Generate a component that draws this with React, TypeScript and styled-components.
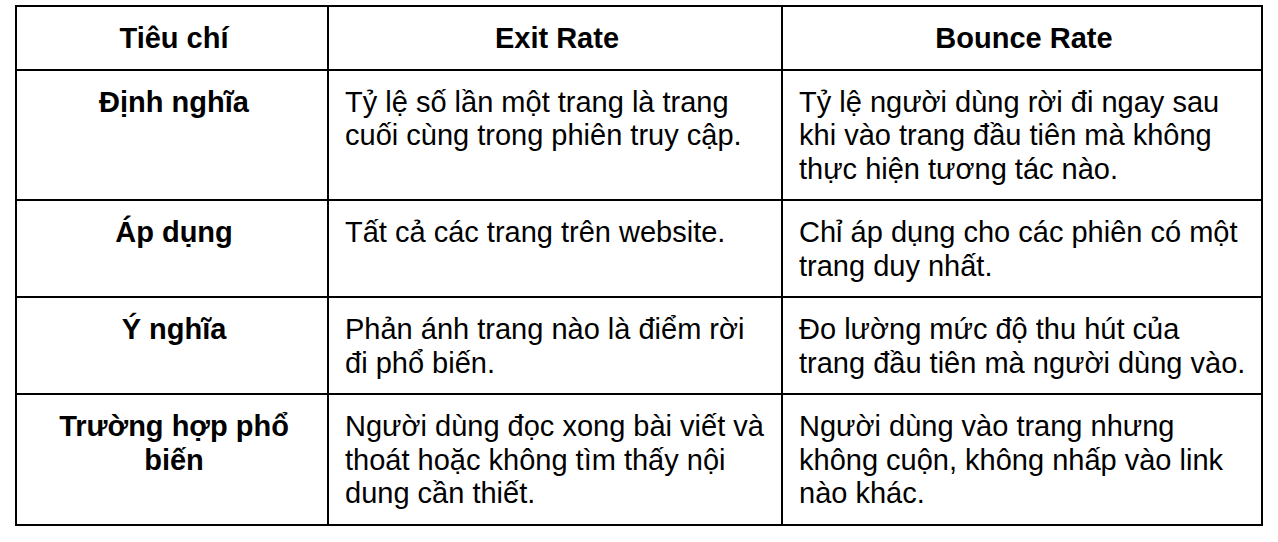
import React from "react";
import styled, { createGlobalStyle } from "styled-components";

const Global = createGlobalStyle`
  html, body { margin: 0; padding: 0; background: #ffffff; }
  body { font-family: "Liberation Sans", Arial, sans-serif; color: #000; }
`;

const Page = styled.div`
  padding: 5px 0 0 15px;
`;

const Table = styled.table`
  border-collapse: collapse;
  table-layout: fixed;
  width: 1246px;
  font-family: "Liberation Sans", Arial, sans-serif;
  font-size: 29px;
  line-height: 33.5px;
  color: #000;
`;

const Cell = styled.td<{ $head?: boolean; $center?: boolean }>`
  border: 2px solid #000;
  padding: 15px 12px 13px 16px;
  vertical-align: top;
  text-align: ${(p) => (p.$center ? "center" : "left")};
  font-weight: ${(p) => (p.$head ? 700 : 400)};
`;

const rows: [string, string, string][] = [
  [
    "Định nghĩa",
    "Tỷ lệ số lần một trang là trang cuối cùng trong phiên truy cập.",
    "Tỷ lệ người dùng rời đi ngay sau khi vào trang đầu tiên mà không thực hiện tương tác nào.",
  ],
  [
    "Áp dụng",
    "Tất cả các trang trên website.",
    "Chỉ áp dụng cho các phiên có một trang duy nhất.",
  ],
  [
    "Ý nghĩa",
    "Phản ánh trang nào là điểm rời đi phổ biến.",
    "Đo lường mức độ thu hút của trang đầu tiên mà người dùng vào.",
  ],
  [
    "Trường hợp phổ biến",
    "Người dùng đọc xong bài viết và thoát hoặc không tìm thấy nội dung cần thiết.",
    "Người dùng vào trang nhưng không cuộn, không nhấp vào link nào khác.",
  ],
];

export default function App() {
  return (
    <>
      <Global />
      <Page>
        <Table>
          <colgroup>
            <col style={{ width: 312 }} />
            <col style={{ width: 454 }} />
            <col style={{ width: 480 }} />
          </colgroup>
          <thead>
            <tr>
              <Cell as="th" $head $center>Tiêu chí</Cell>
              <Cell as="th" $head $center>Exit Rate</Cell>
              <Cell as="th" $head $center>Bounce Rate</Cell>
            </tr>
          </thead>
          <tbody>
            {rows.map(([a, b, c]) => (
              <tr key={a}>
                <Cell $head $center>{a}</Cell>
                <Cell>{b}</Cell>
                <Cell>{c}</Cell>
              </tr>
            ))}
          </tbody>
        </Table>
      </Page>
    </>
  );
}
